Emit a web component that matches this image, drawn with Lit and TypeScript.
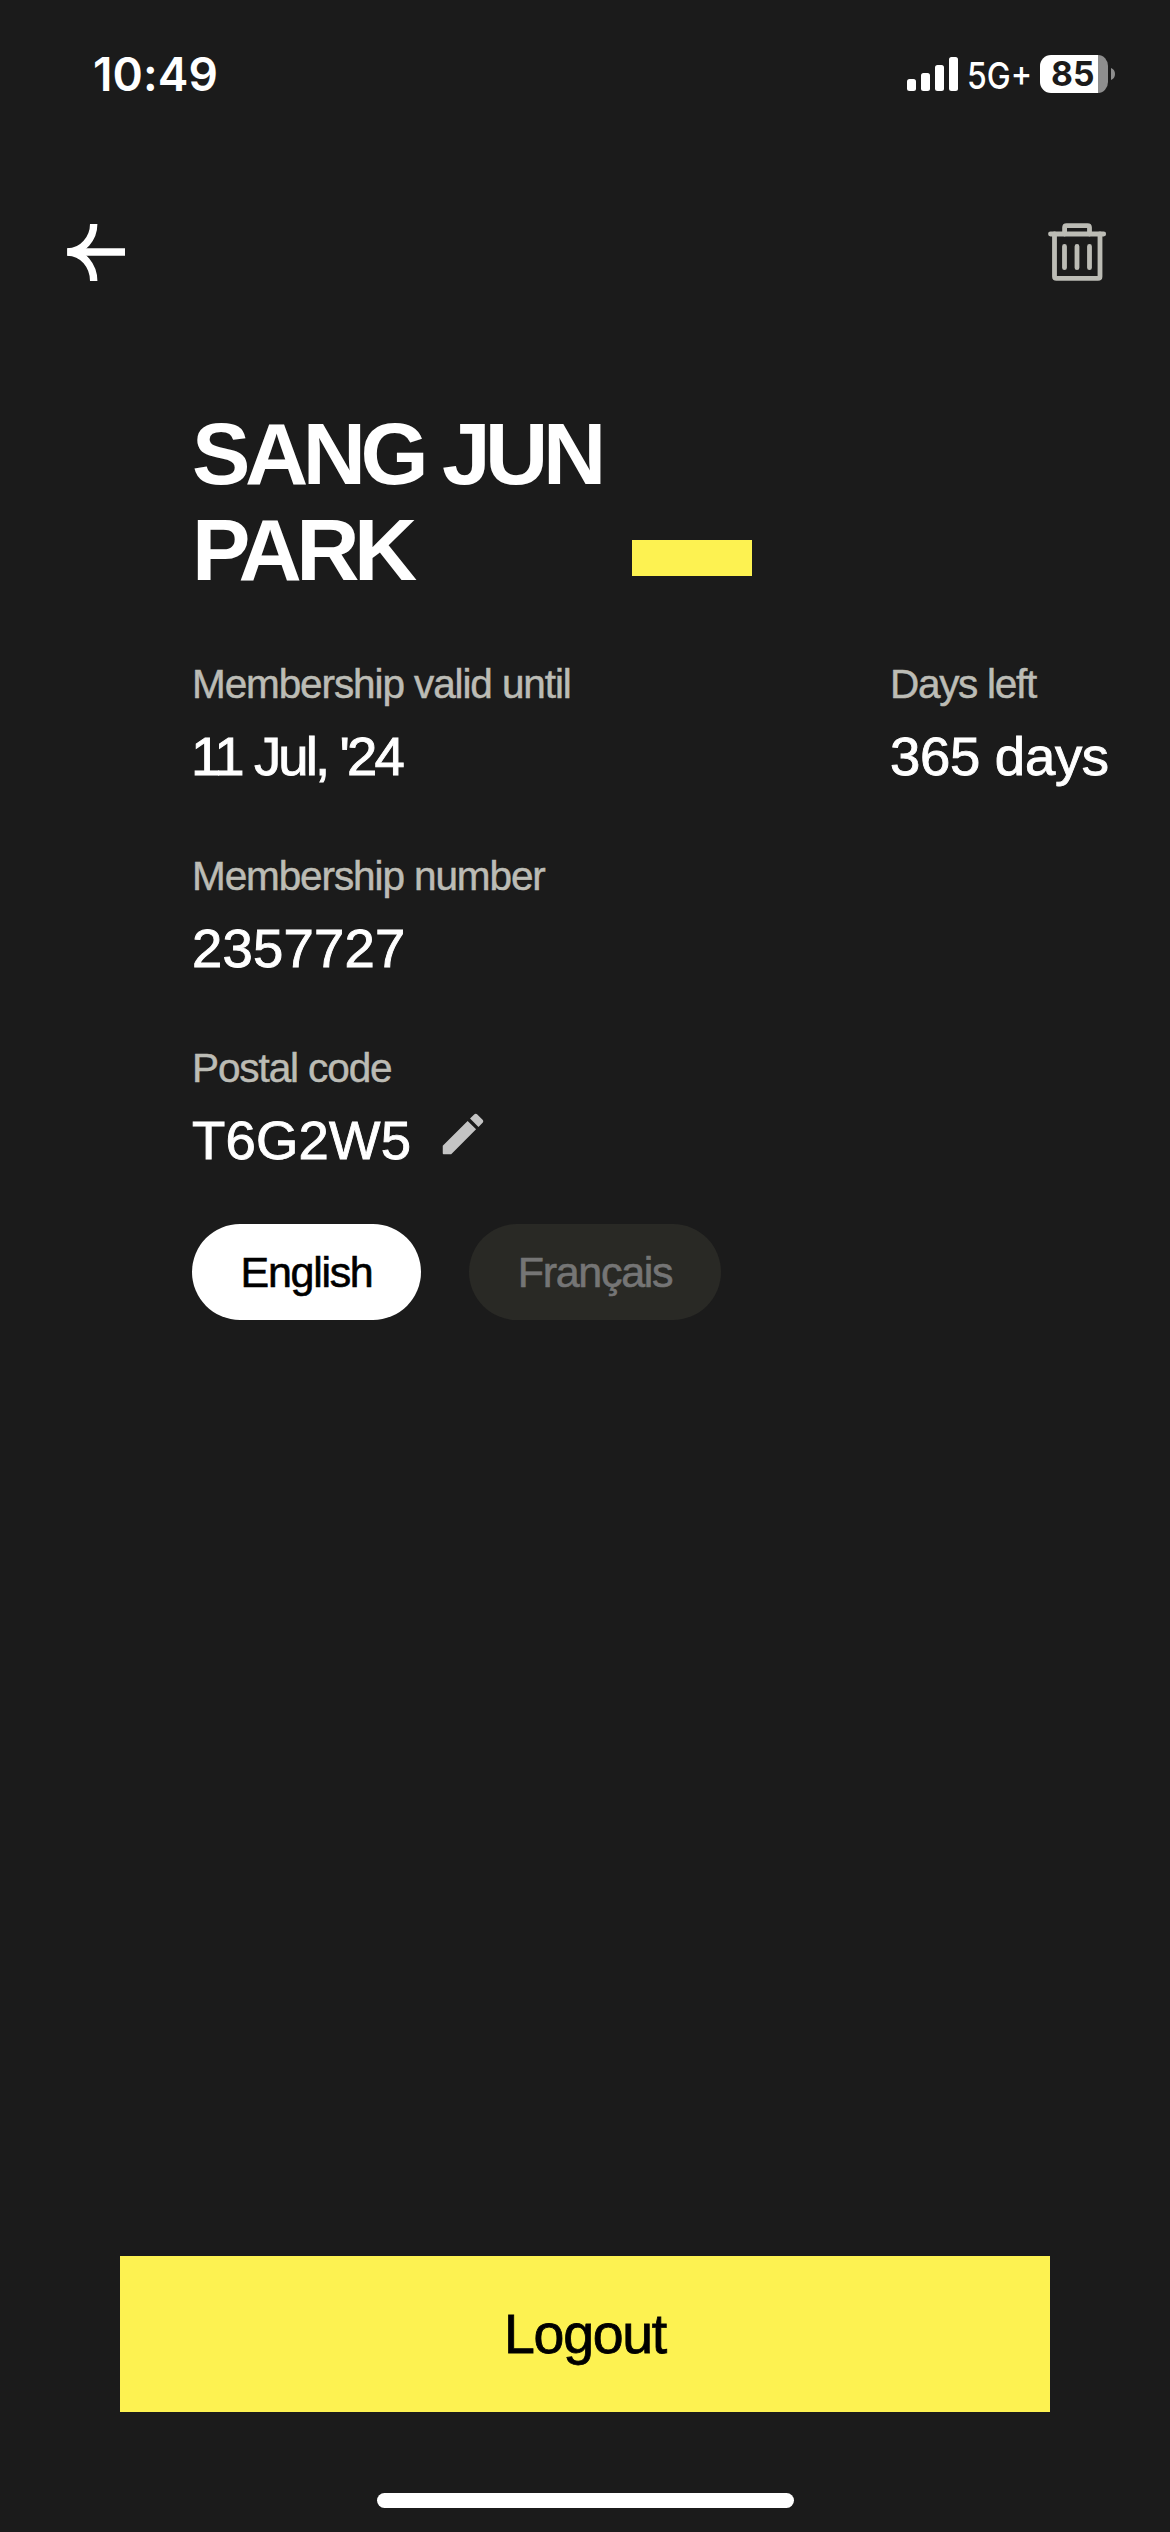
import { LitElement, html, css } from "lit";
import { customElement, property, state } from "lit/decorators.js";
import { classMap } from "lit/directives/class-map.js";

@customElement("status-bar")
class StatusBar extends LitElement {
  static styles = css`
    :host {
      display: flex;
      justify-content: space-between;
      height: 150px;
      padding: 0 54px 0 93px;
      box-sizing: border-box;
      color: #fff;
      font-family: Inter, "Liberation Sans", sans-serif;
    }
    .time {
      font-size: 46px;
      font-weight: 600;
      line-height: 60px;
      margin-top: 44px;
      letter-spacing: 0.1px;
    }
    .status {
      display: block;
      width: 212px;
      height: 50px;
      margin-top: 50px;
    }
  `;
  render() {
    return html`
      <div class="time">10:49</div>
      <svg class="status" viewBox="904 50 212 50">
        <g fill="#fff">
          <rect x="907" y="79" width="9" height="12" rx="2.5" />
          <rect x="921" y="73" width="9" height="18" rx="2.5" />
          <rect x="935" y="65" width="9" height="26" rx="2.5" />
          <rect x="949" y="57" width="9" height="34" rx="2.5" />
        </g>
        <text x="967" y="89.3" font-size="36.5" font-weight="500" fill="#fff"
          textLength="65" lengthAdjust="spacingAndGlyphs">5G+</text>
        <path d="M1098 55 V93 H1051 a11 11 0 0 1 -11 -11 V66 a11 11 0 0 1 11 -11 Z" fill="#fff" />
        <path d="M1098 55 a10 11 0 0 1 10 11 V82 a10 11 0 0 1 -10 11 Z" fill="#8e8e8e" />
        <path d="M1111 68 a6.5 6.5 0 0 1 0 12 Z" fill="#8e8e8e" />
        <text x="1051" y="86" font-size="34" font-weight="700" fill="#1b1b1b"
          textLength="43.5" lengthAdjust="spacingAndGlyphs">85</text>
      </svg>
    `;
  }
}

@customElement("nav-bar")
class NavBar extends LitElement {
  static styles = css`
    :host {
      display: flex;
      justify-content: space-between;
      align-items: center;
      height: 204px;
      padding: 0 60px;
      box-sizing: border-box;
    }
    .icon {
      display: block;
      width: 66px;
      height: 66px;
    }
  `;
  render() {
    return html`
      <svg class="icon" viewBox="60 219 66 66" fill="none" stroke="#fff" stroke-width="7.4">
        <path d="M67.3 252 H125" />
        <path d="M93.7 224 C93.7 238 83 252 67.3 252 C83 252 93.7 266 93.7 281" />
      </svg>
      <svg class="icon" viewBox="1044 219 66 66" fill="none" stroke="#bcbcb5" stroke-width="4.8"
        stroke-linecap="round" stroke-linejoin="round">
        <path d="M1050.5 234 H1103.7" />
        <path d="M1054.5 234 V276.5 Q1054.5 278.4 1056.5 278.4 H1098 Q1100 278.4 1100 276.5 V234" />
        <path d="M1064.6 234 V227.6 Q1064.6 225.6 1066.6 225.6 H1087.5 Q1089.5 225.6 1089.5 227.6 V234" />
        <path d="M1064.5 246.5 V267.7 M1077 246.5 V267.7 M1089.5 246.5 V267.7" />
      </svg>
    `;
  }
}

@customElement("info-field")
class InfoField extends LitElement {
  @property() label = "";
  @property() value = "";
  @property({ reflect: true }) kind = "";
  static styles = css`
    :host {
      display: flex;
      flex-direction: column;
      gap: 13px;
      white-space: nowrap;
    }
    .label {
      font-size: 40.5px;
      line-height: 48px;
      letter-spacing: -1.1px;
      color: #bcbcb5;
      -webkit-text-stroke: 0.5px #bcbcb5;
    }
    .row {
      display: flex;
      height: 72px;
    }
    .value {
      font-size: 54.5px;
      line-height: 72px;
      letter-spacing: 0.2px;
      color: #fff;
      -webkit-text-stroke: 0.9px #fff;
    }
    :host([kind="date"]) .value {
      letter-spacing: -2.9px;
      margin-left: -1px;
    }
    :host([kind="days"]) .label {
      letter-spacing: -1.3px;
    }
    :host([kind="days"]) .value {
      letter-spacing: -0.3px;
    }
    :host([kind="code"]) .value {
      min-width: 244px;
    }
  `;
  render() {
    return html`
      <div class="label">${this.label}</div>
      <div class="row"><span class="value">${this.value}</span><slot></slot></div>
    `;
  }
}

@customElement("app-root")
class AppRoot extends LitElement {
  @state() language = "English";
  static styles = css`
    :host {
      display: block;
    }
    .screen {
      display: flex;
      flex-direction: column;
      width: 1170px;
      height: 2532px;
      box-sizing: border-box;
      overflow: hidden;
      background: #1b1b1b;
      font-family: "Liberation Sans", Arial, sans-serif;
    }
    .profile {
      padding: 52px 0 0 192px;
    }
    .heading {
      display: flex;
      align-items: flex-end;
      height: 192px;
    }
    .name {
      width: 440px;
      margin: 0;
      font-size: 87.6px;
      line-height: 96px;
      font-weight: 700;
      letter-spacing: -5.5px;
      color: #fff;
    }
    .accent {
      width: 120px;
      height: 36px;
      margin-bottom: 22px;
      background: #fdf251;
    }
    .fields {
      display: grid;
      grid-template-columns: 698px 1fr;
      row-gap: 59px;
      margin-top: 62px;
    }
    .wide {
      grid-column: 1 / -1;
    }
    .edit {
      width: 54px;
      height: 54px;
      margin-top: 2px;
      fill: #c4c4c4;
    }
    .languages {
      display: flex;
      gap: 48px;
      margin-top: 47px;
    }
    .pill {
      width: 252px;
      height: 96px;
      padding: 0;
      border: 0;
      border-radius: 48px;
      background: #292925;
      color: #757575;
      font: 43px/96px "Liberation Sans", Arial, sans-serif;
      letter-spacing: -1.3px;
      text-align: center;
      -webkit-text-stroke: 0.6px currentColor;
    }
    .pill.selected {
      width: 229px;
      background: #fff;
      color: #000;
    }
    .logout {
      height: 156px;
      margin: auto 120px 0;
      padding: 0;
      border: 0;
      background: #fdf251;
      color: #000;
      font: 55.5px/156px "Liberation Sans", Arial, sans-serif;
      letter-spacing: -1.3px;
      text-align: center;
      -webkit-text-stroke: 0.8px currentColor;
    }
    .home {
      flex: none;
      width: 417px;
      height: 15px;
      margin: 81px auto 24px 377px;
      border-radius: 7.5px;
      background: #fff;
    }
  `;
  render() {
    return html`
      <div class="screen">
        <status-bar></status-bar>
        <nav-bar></nav-bar>
        <main class="profile">
          <div class="heading">
            <h1 class="name">SANG JUN<br />PARK</h1>
            <span class="accent"></span>
          </div>
          <div class="fields">
            <info-field kind="date" label="Membership valid until" value="11 Jul, '24"></info-field>
            <info-field kind="days" label="Days left" value="365 days"></info-field>
            <info-field class="wide" label="Membership number" value="2357727"></info-field>
            <info-field class="wide" kind="code" label="Postal code" value="T6G2W5">
              <svg class="edit" viewBox="0 0 24 24">
                <path d="M3 17.25V20.6Q3 21 3.4 21H6.75L17.81 9.94l-3.75-3.75L3 17.25zM20.71 7.04c.39-.39.39-1.02 0-1.41l-2.34-2.34c-.39-.39-1.02-.39-1.41 0l-1.83 1.83 3.75 3.75 1.83-1.83z" />
              </svg>
            </info-field>
          </div>
          <div class="languages">
            ${["English", "Français"].map(
              (name) => html`<button
                class=${classMap({ pill: true, selected: this.language === name })}
                @click=${() => (this.language = name)}
              >${name}</button>`
            )}
          </div>
        </main>
        <button class="logout">Logout</button>
        <div class="home"></div>
      </div>
    `;
  }
}
